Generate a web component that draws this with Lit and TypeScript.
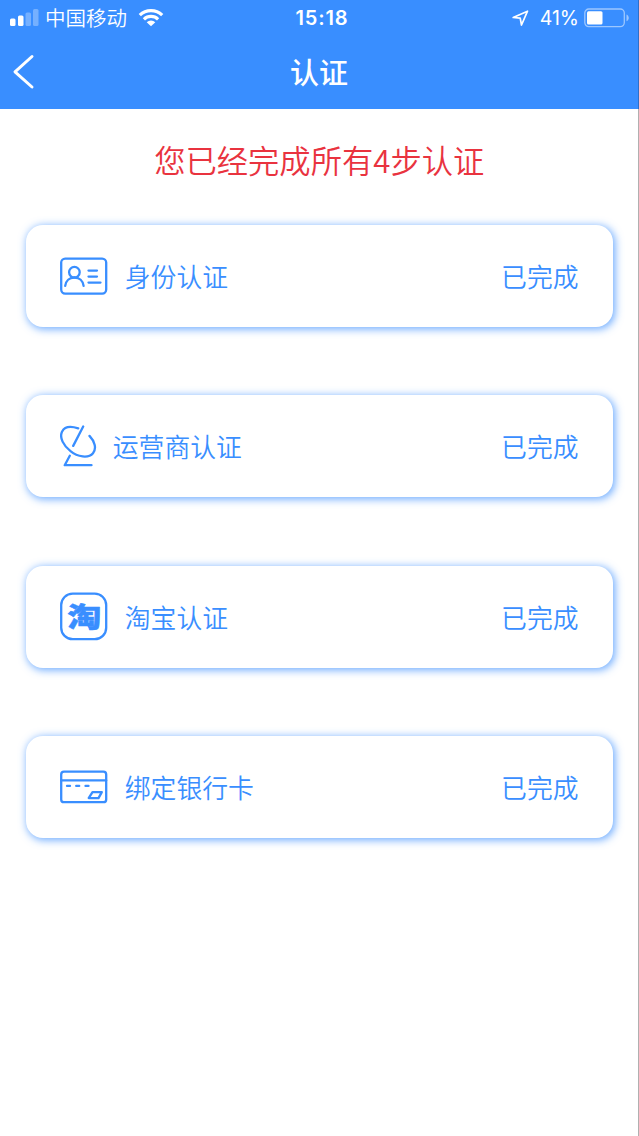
import { LitElement, html, css, svg } from "lit";
import { customElement, property } from "lit/decorators.js";

const icons: Record<string, unknown> = {
  id: html`<svg width="49" height="38" viewBox="0 0 49 38">${svg`
    <rect x="1.2" y="1.6" width="45" height="35" rx="4"/>
    <circle cx="14.4" cy="15.200" r="5.300"/>
    <path d="M5.200 28.900c.6-5 4.200-8.400 9.200-8.400s8.600 3.400 9.200 8.400M28.500 13.600H37M28.500 19.600H37M28.500 25.600h12"/>`}</svg>`,
  dish: html`<svg width="37" height="42" viewBox="0 0 37 42">${svg`
    <path d="M18.200 3.400C11 1 4.500 1.700 2 6.700c-2.800 6 1.500 14 8.500 19.500C17.500 32 28.500 33.700 33 28.200 37 23.200 34.500 16.200 29.500 10.900M23.200 1.500 13.200 20.900M9.800 30.700 4.700 40.200h26.800"/>`}</svg>`,
  tao: html`<svg width="49" height="49" viewBox="0 0 49 49">${svg`
    <rect x="1.200" y="1.600" width="45" height="45.600" rx="11.500"/>
    <text x="24.200" y="34.800" text-anchor="middle" textLength="34" lengthAdjust="spacingAndGlyphs">淘</text>`}</svg>`,
  card: html`<svg width="49" height="34" viewBox="0 0 49 34">${svg`
    <rect x="1.200" y="1.600" width="45" height="30.600" rx="2.800"/>
    <path d="M1.200 10.400h45M32.500 22.100h9.300l-3.300 6h-9.800z"/>
    <path d="M7 15.900h3M16.200 15.900h3M25.500 15.900h3"/>`}</svg>`,
};

@customElement("status-bar")
class StatusBar extends LitElement {
  static styles = css`
    :host { display: flex; height: 36px; align-items: center; color: #fff; justify-content: space-between; box-sizing: border-box; padding: 0 8px 0 10px; }
    .side { display: flex; align-items: center; flex: 1; }
    .right { justify-content: flex-end; }
    .carrier { font-size: 20.500px; margin: 0 11px 0 6px; line-height: 34px; height: 36px; font-weight: 350; }
    .time { font: 600 20px/36px Inter, sans-serif; letter-spacing: 0.850px; margin-left: 4px; }
    .percent { font: 400 19.500px/36px Inter, sans-serif; margin: 0 5px 0 11px; }
    svg { display: block; flex: none; }
  `;
  render() {
    return html`
      <div class="side">
        <svg width="29" height="18" viewBox="0 0 29 18" fill="#fff">
          <rect y="9.500" width="5.500" height="7.500" rx="1.500"/>
          <rect x="8" y="6.500" width="5.500" height="10.500" rx="1.500"/>
          <g opacity=".3"><rect x="15.500" y="3.500" width="5.500" height="13.500" rx="1.500"/><rect x="23" width="5.500" height="17" rx="1.500"/></g>
        </svg>
        <span class="carrier">中国移动</span>
        <svg width="26" height="18" viewBox="0 0 26 18">
          <g fill="none" stroke="#fff" stroke-width="3.200"><path d="M1.800 6.200a16 16 0 0 1 22.400 0M5.900 10.300a10.200 10.200 0 0 1 14.200 0"/></g>
          <path d="M8.700 13.200a6.200 6.200 0 0 1 8.600 0L13 17.300z" fill="#fff"/>
        </svg>
      </div>
      <span class="time">15:18</span>
      <div class="side right">
        <svg width="17" height="17" viewBox="0 0 17 17"><path d="M1.200 7.500 15.500 1.200 9.500 15 8.200 8.200z" fill="none" stroke="#fff" stroke-width="1.700" stroke-linejoin="round"/></svg>
        <span class="percent">41%</span>
        <svg width="46" height="20" viewBox="0 0 46 20">
          <rect x=".8" y="1" width="39.500" height="17.600" rx="4" fill="none" stroke="#fff" stroke-opacity=".5" stroke-width="1.300"/>
          <rect x="3" y="3.200" width="15.500" height="13.200" rx="1.500" fill="#fff"/>
          <path d="M42.500 6.500c3 1.300 3 5.500 0 6.800z" fill="#fff" opacity=".5"/>
        </svg>
      </div>`;
  }
}

@customElement("step-card")
class StepCard extends LitElement {
  @property() icon = "id";
  @property() label = "";
  static styles = css`
    :host { display: flex; align-items: center; box-sizing: border-box; height: 102px; padding: 0 34.500px 0 34px; border-radius: 17px; background: #fff; color: #398eff; font-size: 25.800px; line-height: 40px; font-weight: 350; box-shadow: 1.500px 1.500px 8px rgba(57, 142, 255, 0.750); }
    .label { flex: 1; margin-left: 16.300px; }
    svg { display: block; flex: none; fill: none; stroke: #398eff; stroke-width: 2.300; stroke-linecap: round; stroke-linejoin: round; }
    text { font: 900 27px "Noto Sans CJK SC", sans-serif; fill: #398eff; stroke-width: 0.500; }
  `;
  render() {
    return html`${icons[this.icon]}<span class="label">${this.label}</span><span>已完成</span>`;
  }
}

@customElement("app-root")
class AppRoot extends LitElement {
  static styles = css`
    :host { display: flex; flex-direction: column; height: 1136px; background: #fff; font-family: "Noto Sans CJK SC", sans-serif; overflow: hidden; }
    header { height: 109px; box-sizing: border-box; background: #398eff; border-right: 1px solid #2f70c8; color: #fff; }
    .nav { display: grid; grid-template-columns: 60px 1fr 60px; align-items: center; height: 72px; }
    .nav svg { display: block; margin-left: 12px; }
    h1 { margin: 0 0 2px; font-size: 29px; line-height: 40px; font-weight: 500; text-align: center; }
    main { flex: 1; border-right: 1px solid #b0b0b0; padding: 27px 25px 0 25.500px; }
    h2 { margin: 0 0 41px; font-size: 31.300px; line-height: 48px; font-weight: 350; color: #e9333f; text-align: center; }
    .steps { display: grid; gap: 68.300px; }
  `;
  render() {
    return html`
      <header>
        <status-bar></status-bar>
        <div class="nav">
          <svg width="24" height="36" viewBox="0 0 24 36" fill="none" stroke="#fff" stroke-width="3" stroke-linecap="round" stroke-linejoin="round"><path d="M20 2.500 3 17.800 20 33"/></svg>
          <h1>认证</h1>
        </div>
      </header>
      <main>
        <h2>您已经完成所有4步认证</h2>
        <div class="steps">
          <step-card icon="id" label="身份认证"></step-card>
          <step-card icon="dish" label="运营商认证"></step-card>
          <step-card icon="tao" label="淘宝认证"></step-card>
          <step-card icon="card" label="绑定银行卡"></step-card>
        </div>
      </main>`;
  }
}
